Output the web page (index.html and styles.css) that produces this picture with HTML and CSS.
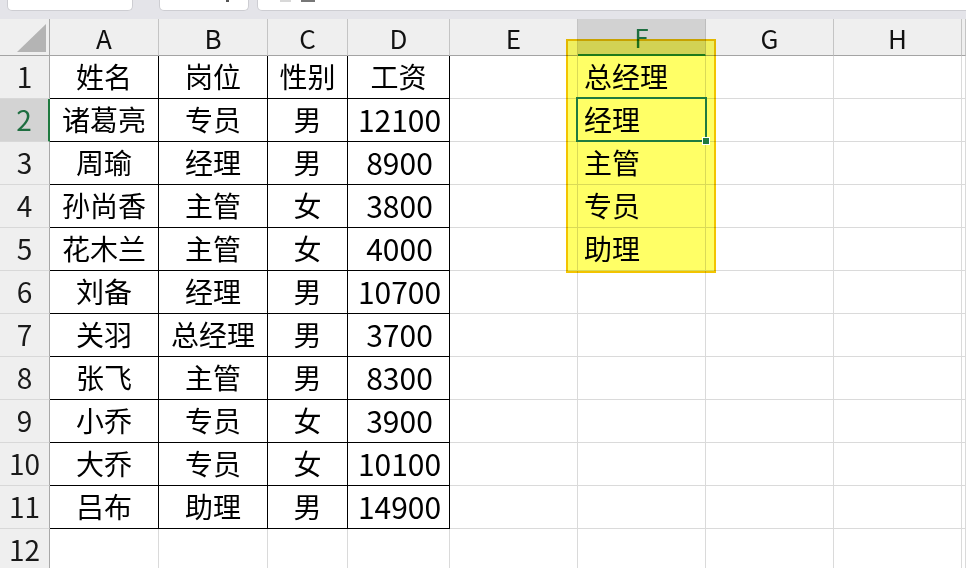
FILE: index.html
```html
<!DOCTYPE html>
<html lang="zh">
<head>
<meta charset="utf-8">
<title>Sheet</title>
<link rel="stylesheet" href="styles.css">
</head>
<body>
<div class="app">
  <div class="topbar">
    <div class="box box-name"></div>
    <div class="box box-mid"><span class="chev"></span></div>
    <div class="box box-formula"><span class="ico ico-a"></span><span class="ico ico-b"></span></div>
  </div>
  <div class="sheet">
    <div class="corner"><span class="tri"></span></div>
    <div class="ch">A</div><div class="ch">B</div><div class="ch">C</div><div class="ch">D</div><div class="ch">E</div><div class="ch ch-sel">F</div><div class="ch">G</div><div class="ch">H</div><div class="ch"></div>

    <div class="rh">1</div><div class="c t">姓名</div><div class="c t">岗位</div><div class="c t">性别</div><div class="c t">工资</div><div class="c"></div><div class="c f">总经理</div><div class="c"></div><div class="c"></div><div class="c"></div>
    <div class="rh rh-sel">2</div><div class="c t">诸葛亮</div><div class="c t">专员</div><div class="c t">男</div><div class="c t n">12100</div><div class="c"></div><div class="c f">经理</div><div class="c"></div><div class="c"></div><div class="c"></div>
    <div class="rh">3</div><div class="c t">周瑜</div><div class="c t">经理</div><div class="c t">男</div><div class="c t n">8900</div><div class="c"></div><div class="c f">主管</div><div class="c"></div><div class="c"></div><div class="c"></div>
    <div class="rh">4</div><div class="c t">孙尚香</div><div class="c t">主管</div><div class="c t">女</div><div class="c t n">3800</div><div class="c"></div><div class="c f">专员</div><div class="c"></div><div class="c"></div><div class="c"></div>
    <div class="rh">5</div><div class="c t">花木兰</div><div class="c t">主管</div><div class="c t">女</div><div class="c t n">4000</div><div class="c"></div><div class="c f">助理</div><div class="c"></div><div class="c"></div><div class="c"></div>
    <div class="rh">6</div><div class="c t">刘备</div><div class="c t">经理</div><div class="c t">男</div><div class="c t n">10700</div><div class="c"></div><div class="c f"></div><div class="c"></div><div class="c"></div><div class="c"></div>
    <div class="rh">7</div><div class="c t">关羽</div><div class="c t">总经理</div><div class="c t">男</div><div class="c t n">3700</div><div class="c"></div><div class="c f"></div><div class="c"></div><div class="c"></div><div class="c"></div>
    <div class="rh">8</div><div class="c t">张飞</div><div class="c t">主管</div><div class="c t">男</div><div class="c t n">8300</div><div class="c"></div><div class="c f"></div><div class="c"></div><div class="c"></div><div class="c"></div>
    <div class="rh">9</div><div class="c t">小乔</div><div class="c t">专员</div><div class="c t">女</div><div class="c t n">3900</div><div class="c"></div><div class="c f"></div><div class="c"></div><div class="c"></div><div class="c"></div>
    <div class="rh">10</div><div class="c t">大乔</div><div class="c t">专员</div><div class="c t">女</div><div class="c t n">10100</div><div class="c"></div><div class="c f"></div><div class="c"></div><div class="c"></div><div class="c"></div>
    <div class="rh">11</div><div class="c t">吕布</div><div class="c t">助理</div><div class="c t">男</div><div class="c t n">14900</div><div class="c"></div><div class="c f"></div><div class="c"></div><div class="c"></div><div class="c"></div>
    <div class="rh">12</div><div class="c"></div><div class="c"></div><div class="c"></div><div class="c"></div><div class="c"></div><div class="c f"></div><div class="c"></div><div class="c"></div><div class="c"></div>

    <div class="highlight"></div>
    <div class="selection"><span class="handle"></span></div>
  </div>
</div>
</body>
</html>
```

FILE: styles.css
```css
* { box-sizing: border-box; }
html, body { margin: 0; padding: 0; background: #fff; }
body { width: 966px; height: 568px; overflow: hidden; font-family: "Noto Sans CJK SC", "Noto Sans", sans-serif; color: #000; }

.app { display: flex; flex-direction: column; }

.topbar {
  height: 19px;
  background: #e4e4e9;
  display: flex;
  align-items: flex-start;
  padding-left: 7px;
  overflow: hidden;
}
.box {
  height: 11px;
  background: #fff;
  border: 1px solid #cdcdd2;
  border-top: none;
  border-radius: 0 0 5px 5px;
  position: relative;
  flex: none;
}
.box-name { width: 126px; }
.box-mid { width: 90px; margin-left: 26px; }
.box-formula { flex: 1; margin-left: 8px; margin-right: -10px; display: flex; align-items: flex-start; padding-left: 22px; gap: 10px; }
.chev { position: absolute; left: 66px; top: 0; width: 3px; height: 2px; background: #555; }
.ico { display: block; height: 2px; }
.ico-a { width: 11px; background: #d8d8d8; }
.ico-b { width: 14px; background: #777; }

.sheet {
  position: relative;
  display: grid;
  grid-template-columns: 50px 109px 109px 80px 102px 128px 128px 128px 128px 1fr;
  grid-template-rows: 37px;
  grid-auto-rows: 43px;
}

.corner, .ch {
  background: #efefef;
  border-right: 1px solid #c4c4c4;
  border-bottom: 1px solid #a4a4a4;
}
.corner { position: relative; border-right-color: #a8a8a8; }
.tri {
  position: absolute;
  left: 17px; top: 5px;
  width: 0; height: 0;
  border-left: 29px solid transparent;
  border-bottom: 28px solid #b4b4b4;
}
.ch {
  display: flex; align-items: center; justify-content: center;
  font-size: 26px; line-height: 1; color: #111;
  padding-top: 1px;
}
.ch-sel { background: #d2d2d2; color: #1e6e40; border-bottom: 2px solid #1f7a3f; border-right-color: #bdbdbd; }

.rh {
  background: #efefef;
  border-right: 1px solid #a8a8a8;
  border-bottom: 1px solid #d8d8d8;
  display: flex; align-items: center; justify-content: center;
  font-size: 28px; line-height: 1; color: #1a1a1a;
  padding-bottom: 2px;
}
.rh-sel { background: #d3d3d3; color: #1e6e40; border-right: 2px solid #1f7a3f; }

.c {
  border-right: 1px solid #dadada;
  border-bottom: 1px solid #dadada;
  display: flex; align-items: center; justify-content: center;
  font-size: 28px; line-height: 1; white-space: nowrap;
  padding-bottom: 3px;
}
.t { border-right-color: #000; border-bottom-color: #000; }
.n { font-size: 30px; padding-left: 2px; }
.f { justify-content: flex-start; padding-left: 6px; }

.highlight {
  position: absolute;
  left: 566px; top: 20px;
  width: 150px; height: 234px;
  background: #ffff66;
  border: 2px solid #f2c400;
  mix-blend-mode: multiply;
  pointer-events: none;
}
.selection {
  position: absolute;
  left: 576px; top: 78px;
  width: 131px; height: 45px;
  border: 2px solid #1f7a3f;
  pointer-events: none;
}
.handle {
  position: absolute;
  right: -4px; bottom: -4px;
  width: 6px; height: 6px;
  background: #1f7a3f;
  outline: 1px solid #fff;
}
```
